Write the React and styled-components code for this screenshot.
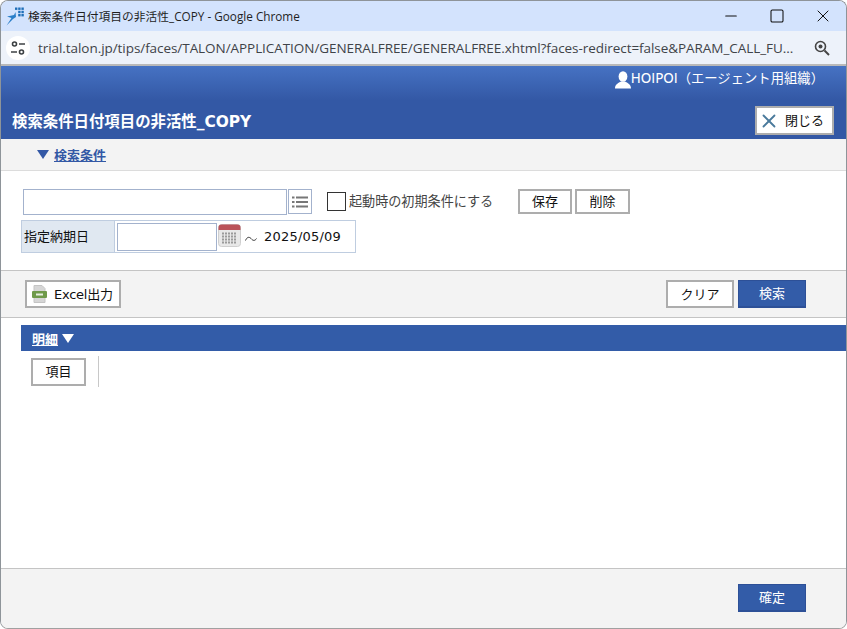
import React from 'react'
import styled, { createGlobalStyle } from 'styled-components'
import { X, Minus, Square } from 'lucide-react'

const GlobalStyle = createGlobalStyle`
  html, body {
    margin: 0;
    padding: 0;
    background: #fff;
  }
  * {
    box-sizing: border-box;
  }
`

const FONT = `"DejaVu Sans", "Noto Sans CJK JP", sans-serif`
const CHROME_FONT = `"Open Sans", "Noto Sans CJK JP", sans-serif`

const Window = styled.div`
  width: 847px;
  height: 629px;
  display: flex;
  flex-direction: column;
  border: 1px solid #8e9499;
  border-bottom-color: #a0a0a0;
  border-radius: 8px 8px 8px 8px;
  overflow: hidden;
  background: #fff;
  font-family: ${FONT};
  font-size: 13px;
  color: #111;
`

const TitleBar = styled.div`
  height: 30px;
  flex: none;
  display: flex;
  align-items: center;
  background: #d3e3fd;
  padding-left: 5px;
`

const AppTitle = styled.span`
  font-family: ${CHROME_FONT};
  font-size: 11.75px;
  color: #1f1f1f;
  margin-left: 4px;
  padding-bottom: 2px;
  flex: 1;
`

const WinButton = styled.span`
  width: 46px;
  height: 30px;
  display: flex;
  align-items: center;
  justify-content: center;
  color: #111;
`

const AddressBar = styled.div`
  height: 35px;
  flex: none;
  display: flex;
  align-items: center;
  background: #edf2fa;
  border-bottom: 2px solid #b9b9b9;
  padding: 0 16px 0 5px;
`

const SiteBadge = styled.span`
  width: 24px;
  height: 24px;
  flex: none;
  border-radius: 50%;
  background: #fff;
  display: flex;
  align-items: center;
  justify-content: center;
`

const Url = styled.span`
  font-family: ${CHROME_FONT};
  font-size: 13.5px;
  color: #3f4348;
  margin-left: 8px;
  flex: 1;
  white-space: nowrap;
  letter-spacing: -0.06px;
`

const Header = styled.header`
  height: 73px;
  flex: none;
  display: flex;
  flex-direction: column;
  background: linear-gradient(#4672c3 0, #3358a5 47%, #3358a5 100%);
  color: #fff;
`

const UserRow = styled.div`
  height: 31px;
  display: flex;
  align-items: center;
  justify-content: flex-end;
  padding: 0 22px 8px 0;
  font-size: 13.33px;
`

const UserGlyph = styled.svg`
  margin-top: 5px;
  margin-left: -1px;
`

const TitleRow = styled.div`
  height: 42px;
  display: flex;
  align-items: flex-start;
  justify-content: space-between;
  padding: 9px 12px 0 11px;
`

const PageTitle = styled.h1`
  margin: 7px 0 0;
  font-size: 15.4px;
  font-weight: bold;
  line-height: 18px;
`

const CloseButton = styled.button`
  width: 79px;
  height: 29px;
  display: flex;
  align-items: center;
  gap: 5px;
  padding: 0 0 2px 1px;
  background: #fff;
  border: 2px solid #adadad;
  font-family: ${FONT};
  font-size: 13px;
  color: #111;

  svg {
    margin-top: 2px;
  }
`

const SectionHead = styled.div`
  height: 32px;
  flex: none;
  display: flex;
  align-items: center;
  gap: 5px;
  padding-left: 36px;
  background: #f3f3f3;
  border-bottom: 1px solid #dcdcdc;
`

const Toggle = styled.a`
  color: ${(p) => p.$color};
  font-weight: bold;
  font-size: 13px;
  text-decoration: underline;
`

const Caret = styled.span`
  width: 0;
  height: 0;
  border-left: 6px solid transparent;
  border-right: 6px solid transparent;
  border-top: 9px solid ${(p) => p.$color};
`

const SearchBody = styled.div`
  height: 99px;
  flex: none;
  display: flex;
  flex-direction: column;
  padding: 17px 0 0 20px;
`

const ConditionRow = styled.div`
  display: flex;
  align-items: center;
  height: 27px;
  margin-left: 2px;
`

const TextInput = styled.input`
  width: ${(p) => p.$width}px;
  height: ${(p) => p.$height}px;
  flex: none;
  border: 1px solid #a3b2cd;
  background: #fff;
  padding: 0;
  outline: none;
`

const ListButton = styled.span`
  width: 24px;
  height: 25px;
  margin-left: 1px;
  flex: none;
  display: flex;
  align-items: center;
  justify-content: center;
  border: 1px solid #a3b2cd;
  background: #fff;
`

const CheckBox = styled.span`
  width: 19px;
  height: 19px;
  margin-left: 15px;
  flex: none;
  border: 1px solid #333;
  background: #fff;
`

const CheckLabel = styled.label`
  margin-left: 3px;
  width: 169px;
  padding-bottom: 2px;
  font-size: 13.1px;
  color: #444;
`

const PlainButton = styled.button`
  width: ${(p) => p.$width}px;
  height: ${(p) => p.$height || 25}px;
  margin-right: 3px;
  flex: none;
  padding: 0 0 2px;
  background: #fff;
  border: 2px solid #adadad;
  font-family: ${FONT};
  font-size: 13px;
  color: #111;
`

const DateRow = styled.div`
  width: 335px;
  height: 33px;
  margin-top: 5px;
  display: flex;
  align-items: center;
  border: 1px solid #bfcde0;
  background: #fff;
`

const DateLabel = styled.span`
  width: 93px;
  height: 100%;
  flex: none;
  display: flex;
  align-items: center;
  padding: 0 0 3px 2px;
  background: #e0e8f1;
  border-right: 1px solid #bfcde0;
  font-size: 13px;
`

const DateFields = styled.div`
  display: flex;
  align-items: center;
  padding-left: 2px;
`

const CalendarGlyph = styled.svg`
  flex: none;
  margin: -2px 0 0 1px;
`

const Wave = styled.span`
  margin: 5px 7px 0 3px;
  display: flex;
`

const DateValue = styled.span`
  font-size: 13px;
  letter-spacing: 0.2px;
`

const Toolbar = styled.div`
  height: 48px;
  flex: none;
  display: flex;
  align-items: center;
  justify-content: space-between;
  padding: 0 40px 0 24px;
  background: #f3f3f3;
  border-top: 1px solid #c4c4c4;
  border-bottom: 1px solid #c4c4c4;
`

const ButtonGroup = styled.div`
  display: flex;
  gap: 4px;
`

const ExcelButton = styled.button`
  width: 96px;
  height: 28px;
  display: flex;
  align-items: center;
  gap: 7px;
  padding: 0 0 2px 5px;
  background: #fff;
  border: 2px solid #adadad;
  font-family: ${FONT};
  font-size: 13px;
  letter-spacing: -0.25px;
  color: #111;

  svg {
    margin-top: 2px;
  }
`

const PrimaryButton = styled.button`
  width: 68px;
  height: 28px;
  padding: 0 0 2px;
  background: #335ca8;
  border: 1px solid #2d5097;
  border-bottom-width: 2px;
  font-family: ${FONT};
  font-size: 13px;
  color: #fff;
`

const GhostButton = styled.button`
  width: 68px;
  height: 28px;
  padding: 0 0 2px;
  background: #fff;
  border: 2px solid #adadad;
  font-family: ${FONT};
  font-size: 13px;
  color: #111;
`

const DetailArea = styled.div`
  flex: 1;
  display: flex;
  flex-direction: column;
  padding: 7px 0 0 20px;
  background: #fff;
`

const DetailBar = styled.div`
  height: 26px;
  display: flex;
  align-items: center;
  gap: 4px;
  padding-left: 11px;
  background: #335ca8;
`

const ColumnRow = styled.div`
  display: flex;
  align-items: center;
  padding: 5px 0 0 10px;
`

const ColumnDivider = styled.span`
  width: 1px;
  height: 31px;
  margin-left: 9px;
  background: #c8c8c8;
`

const Footer = styled.footer`
  height: 60px;
  flex: none;
  display: flex;
  align-items: flex-start;
  justify-content: flex-end;
  padding: 15px 40px 0 0;
  background: #f3f3f3;
  border-top: 1px solid #c4c4c4;
`

function TalonLogo() {
  return (
    <svg width="18" height="19" viewBox="0 0 18 19">
      <path d="M0.5 18.5 L5.5 11 L1 9.5 L8 8 L9.5 5 L10 10 L7 12 Z" fill="#2a7fc9" />
      <g fill="#1f6fb8">
        <rect x="9" y="0.5" width="2.4" height="2.4" />
        <rect x="12.2" y="0.5" width="2.4" height="2.4" />
        <rect x="15.4" y="0.5" width="2.4" height="2.4" />
        <rect x="12.2" y="3.8" width="2.4" height="2.4" />
        <rect x="15.4" y="3.8" width="2.4" height="2.4" />
        <rect x="12.2" y="7" width="2.4" height="2.4" />
        <rect x="15.4" y="7" width="2.4" height="2.4" />
      </g>
    </svg>
  )
}

function SiteIcon() {
  return (
    <svg width="16" height="16" viewBox="0 0 16 16" fill="none" stroke="#3c4043" strokeWidth="1.6">
      <circle cx="4.5" cy="4" r="2" />
      <path d="M9 4 H15" />
      <path d="M1 12 H7" />
      <circle cx="11.5" cy="12" r="2" />
    </svg>
  )
}

function ZoomIcon() {
  return (
    <svg width="16" height="16" viewBox="0 0 16 16" fill="none">
      <circle cx="6.5" cy="6.5" r="5" stroke="#444" strokeWidth="1.6" />
      <circle cx="6.5" cy="6.5" r="2" fill="#444" />
      <path d="M10.5 10.5 L15 15" stroke="#444" strokeWidth="2" />
    </svg>
  )
}

function UserIcon() {
  return (
    <UserGlyph width="16" height="18" viewBox="0 0 16 18">
      <ellipse cx="8" cy="5.5" rx="4.4" ry="5.3" fill="#fff" />
      <path d="M0 17.5 C0 13 3.5 12 6 10.5 H10 C12.5 12 16 13 16 17.5 Z" fill="#fff" />
    </UserGlyph>
  )
}

function ListIcon() {
  return (
    <svg width="16" height="12" viewBox="0 0 16 12">
      <g fill="#777">
        <rect x="0" y="0.5" width="2.5" height="2" />
        <rect x="4" y="0.5" width="12" height="2" />
        <rect x="0" y="5" width="2.5" height="2" />
        <rect x="4" y="5" width="12" height="2" />
        <rect x="0" y="9.5" width="2.5" height="2" />
        <rect x="4" y="9.5" width="12" height="2" />
      </g>
    </svg>
  )
}

function CalendarIcon() {
  return (
    <CalendarGlyph width="24" height="24" viewBox="0 0 24 24">
      <rect x="0.5" y="0.5" width="22" height="22" rx="3" fill="#e8e8e8" stroke="#cfcfcf" />
      <path d="M0.5 6 V3.5 a3 3 0 0 1 3 -3 H19.5 a3 3 0 0 1 3 3 V6 Z" fill="#bb5359" />
      <g fill="#9a9a9a">
        {[8.5, 11.5, 14.5, 17.5].map((y) =>
          [4, 7, 10, 13, 16].map((x) => <rect key={`${x}-${y}`} x={x} y={y} width="2" height="2" />)
        )}
      </g>
    </CalendarGlyph>
  )
}

function ExcelIcon() {
  return (
    <svg width="15" height="18" viewBox="0 0 15 18">
      <path d="M2 0.5 H10 L13 3.5 V17.5 H2 Z" fill="#d6d6d6" stroke="#c4c4c4" />
      <rect x="0" y="6" width="15" height="7" rx="1" fill="#6f9a4a" />
      <rect x="4" y="8.5" width="7" height="2" fill="#e8efe0" />
    </svg>
  )
}

export default function App() {
  return (
    <>
      <GlobalStyle />
      <Window>
        <TitleBar>
          <TalonLogo />
          <AppTitle>検索条件日付項目の非活性_COPY - Google Chrome</AppTitle>
          <WinButton><Minus size={18} strokeWidth={1.5} /></WinButton>
          <WinButton><Square size={16} strokeWidth={1.6} /></WinButton>
          <WinButton><X size={20} strokeWidth={1.2} /></WinButton>
        </TitleBar>
        <AddressBar>
          <SiteBadge><SiteIcon /></SiteBadge>
          <Url>trial.talon.jp/tips/faces/TALON/APPLICATION/GENERALFREE/GENERALFREE.xhtml?faces-redirect=false&amp;PARAM_CALL_FU...</Url>
          <ZoomIcon />
        </AddressBar>
        <Header>
          <UserRow>
            <UserIcon />
            HOIPOI（エージェント用組織）
          </UserRow>
          <TitleRow>
            <PageTitle>検索条件日付項目の非活性_COPY</PageTitle>
            <CloseButton>
              <X size={22} color="#4a7a9c" strokeWidth={2} />
              閉じる
            </CloseButton>
          </TitleRow>
        </Header>
        <SectionHead>
          <Caret $color="#3358a5" />
          <Toggle $color="#3358a5">検索条件</Toggle>
        </SectionHead>
        <SearchBody>
          <ConditionRow>
            <TextInput $width={264} $height={26} />
            <ListButton><ListIcon /></ListButton>
            <CheckBox />
            <CheckLabel>起動時の初期条件にする</CheckLabel>
            <PlainButton $width={54}>保存</PlainButton>
            <PlainButton $width={55}>削除</PlainButton>
          </ConditionRow>
          <DateRow>
            <DateLabel>指定納期日</DateLabel>
            <DateFields>
              <TextInput $width={100} $height={28} />
              <CalendarIcon />
              <Wave>
                <svg width="12" height="6" viewBox="0 0 12 6" fill="none" stroke="#333" strokeWidth="1">
                  <path d="M0.5 4.5 C2 1 4 0.5 6 2.5 C8 5 10 5 11.5 2.5" />
                </svg>
              </Wave>
              <DateValue>2025/05/09</DateValue>
            </DateFields>
          </DateRow>
        </SearchBody>
        <Toolbar>
          <ExcelButton>
            <ExcelIcon />
            Excel出力
          </ExcelButton>
          <ButtonGroup>
            <GhostButton>クリア</GhostButton>
            <PrimaryButton>検索</PrimaryButton>
          </ButtonGroup>
        </Toolbar>
        <DetailArea>
          <DetailBar>
            <Toggle $color="#fff">明細</Toggle>
            <Caret $color="#fff" />
          </DetailBar>
          <ColumnRow>
            <PlainButton $width={55} $height={28}>項目</PlainButton>
            <ColumnDivider />
          </ColumnRow>
        </DetailArea>
        <Footer>
          <PrimaryButton>確定</PrimaryButton>
        </Footer>
      </Window>
    </>
  )
}
